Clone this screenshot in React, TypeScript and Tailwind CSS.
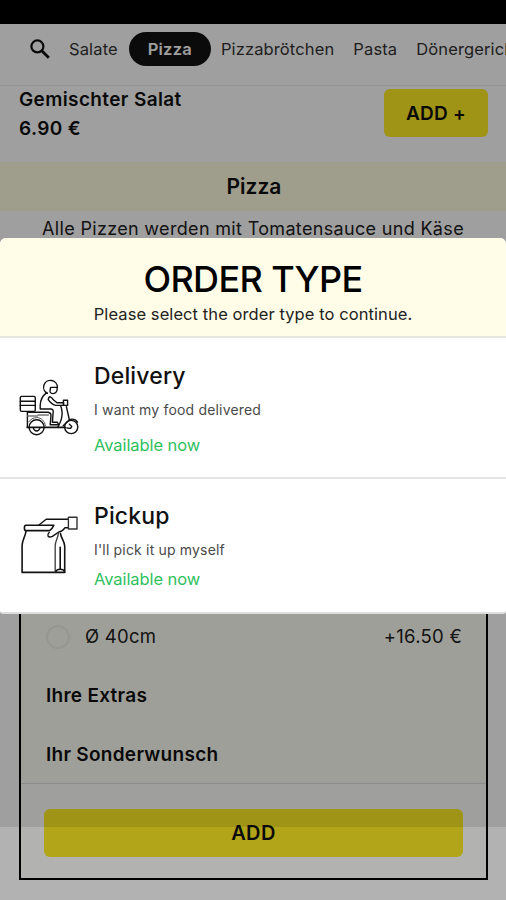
import React from 'react';

const CATEGORIES = ['Salate', 'Pizza', 'Pizzabrötchen', 'Pasta', 'Dönergerichte'];

function SearchIcon() {
  return (
    <svg viewBox="0 0 20 20" className="w-5 h-5 shrink-0" fill="none" stroke="#111" strokeWidth="2.2">
      <circle cx="7.4" cy="7.4" r="6" />
      <path d="M12 12l6.8 6.8" strokeWidth="2.8" />
    </svg>
  );
}

function ScooterIcon() {
  return (
    <svg viewBox="4 4 60 58" className="w-[60px] h-[58px] shrink-0" fill="none" stroke="#111" strokeWidth="1.4" strokeLinecap="round" strokeLinejoin="round">
      {/* box */}
      <rect x="5.3" y="22.4" width="15" height="15" rx="1.4" />
      <path d="M5.3 27.2h15M5.3 31.4h15" />
      {/* rider */}
      <path d="M32.4 19.4a6.9 6.9 0 1 1 10-6h-6.8l-.6 3.8" />
      <path d="M42.2 13.6c.4 3.4-1.4 6-4.2 6-1.4 0-2.4-.6-3-1.6" />
      <path d="M31.8 18.6c-3.6 2.6-6.4 7.4-6.6 12.6V35h10.6c1.6 0 2.6 1.2 2.4 2.8l-.8 10.4h4.8l1.6 2.6h-8.6l.8-9.6c0-1.6-.6-2.2-2-2.4" />
      <path d="M34.8 22.6c1.6.6 2.8 2 3.8 3.4l3.4 2.8h6.6v2.6h-8c-3-.8-5.6-3.2-7.4-5.8.2-1.4.6-2.4 1.6-3z" />
      {/* body */}
      <path d="M48.4 26.2h4.2v5.2h-4.2z" />
      <path d="M45.6 31.6c1.6 4.4 2 9.6.6 14-.8 2.8-1.8 4.8-3.4 7.6M51.4 32.6l3 13.4" />
      <path d="M12.2 38.2h21.4M12.4 38.2v14.2" />
      <path d="M12.8 42h9.4M23 41h10.4" stroke="#777" />
      <path d="M12.2 53.4h38.2" strokeWidth="1.7" />
      <path d="M13.6 48c1.8-2.6 4.6-4.4 8-4.4 4.6 0 8.4 3.6 8.8 8.4" stroke="#555" strokeWidth="1" />
      <path d="M48.2 51.8l6-5.8c3.2-1.6 6.6-.4 8.4 2.2" />
      {/* wheels */}
      <circle cx="21.6" cy="53.2" r="7.5" />
      <path d="M18.4 54.4c.6 1.8 1.8 2.6 3.2 2.6s2.6-.8 3.2-2.6" />
      <circle cx="56.2" cy="53" r="6.6" />
      <path d="M54.4 50.2l2.4 2.2-1.2 2-3.6-.4" />
    </svg>
  );
}

function BagIcon() {
  return (
    <svg viewBox="4 4 60 60" className="w-[60px] h-[60px] shrink-0" fill="none" stroke="#111" strokeWidth="1.4" strokeLinecap="round" strokeLinejoin="round">
      <path d="M11 21c-.4 5-3.9 9.4-3.9 14.4v27h42.6V36c0-4.6-3.4-7.4-4.2-12.4" strokeWidth="1.6" />
      <path d="M38.8 15.3H11c-1.2 0-1.6.9-1.6 2.6 0 1.8.4 2.7 1.6 2.7h23.6c2-1.4 3.4-3.2 4.2-5.3z" strokeWidth="1.6" />
      {/* arm */}
      <path d="M24.2 14.8l7-5.6h22M53.4 17.8h-3.6c-1.6 2.6-3.2 3.8-6 4.2l-6.4 4.4c-1.8.8-3.6.8-4.4-.4-.6-1.2 0-2.4 1.2-3.6" />
      <rect x="53.4" y="7.2" width="8.6" height="11.8" stroke="#333" />
      {/* side fold */}
      <path d="M43.4 23.4c-.4 4.6-3.2 8-3.2 12.4V62" stroke="#444" />
      <path d="M45.2 37.4v21.4" strokeWidth="1.6" />
      <path d="M40.6 62c.6-1.8 2.4-2.8 4.6-2.8s4 1 4.6 2.8" />
    </svg>
  );
}

type OrderOptionProps = {
  icon: React.ReactNode;
  title: string;
  text: string;
};

function OrderOption({ icon, title, text }: OrderOptionProps) {
  return (
    <>
      {icon}
      <div className="ml-[15px] flex flex-col items-start">
        <h3 className="text-[23px] leading-7 font-medium tracking-[0.15px]">{title}</h3>
        <p className="mt-2.5 text-[14px] leading-5 text-[#4a4a4a] tracking-[0.18px]">{text}</p>
      </div>
    </>
  );
}

function OrderTypeModal() {
  return (
    <div className="absolute inset-x-0 top-[238px] z-10 h-[376px] bg-white rounded-t-md rounded-b-[3px] overflow-hidden border-b-2 border-[#dedede] text-[#111]">
      <header className="h-[100px] pt-[21px] bg-[#fffde8] border-b-2 border-[#e7e7e0] text-center">
        <h2 className="text-[36px] leading-10 font-medium tracking-[-0.65px] text-black">ORDER TYPE</h2>
        <p className="mt-[5px] text-[16.5px] leading-5 tracking-[0.08px] text-[#222]">Please select the order type to continue.</p>
      </header>
      <div className="relative h-[141px] pl-[19px] pt-6 flex items-start border-b-2 border-[#e3e5e5]">
        <OrderOption icon={<div className="pt-4"><ScooterIcon /></div>} title="Delivery" text="I want my food delivered" />
        <span className="absolute left-[94px] top-[97px] text-[16.5px] leading-5 tracking-[-0.08px] text-[#2fc05e]">Available now</span>
      </div>
      <div className="relative h-[135px] pl-[19px] pt-[23px] flex items-start">
        <OrderOption icon={<div className="pt-3"><BagIcon /></div>} title="Pickup" text="I'll pick it up myself" />
        <span className="absolute left-[94px] top-[90px] text-[16.5px] leading-5 tracking-[-0.08px] text-[#2fc05e]">Available now</span>
      </div>
    </div>
  );
}

export default function App() {
  return (
    <div className="relative w-[506px] h-[900px] overflow-hidden flex flex-col bg-white text-[#111] font-['Inter',sans-serif]">
      <div className="h-6 shrink-0 bg-black" />
      <nav className="h-[62px] shrink-0 pt-2 pl-[30px] flex items-start border-b border-[#eee] overflow-hidden">
        <div className="h-[34px] flex items-center whitespace-nowrap text-[16.5px] text-[#333]">
          <SearchIcon />
          {CATEGORIES.map(name => (
            <span
              key={name}
              className={name === 'Pizza'
                ? 'h-[34px] px-[19px] ml-[11px] -mr-[9px] rounded-full bg-[#141414] text-white font-semibold tracking-[0.2px] flex items-center'
                : 'ml-[19px] tracking-[0.13px]'}
            >
              {name}
            </span>
          ))}
        </div>
      </nav>

      <section className="h-[76px] shrink-0 pl-[19px] pr-[18px] flex items-start justify-between font-semibold">
        <div className="text-[19px] leading-[29px] -mt-px tracking-[0.38px]">
          <p>Gemischter Salat</p>
          <p>6.90 €</p>
        </div>
        <button className="w-[104px] h-12 mt-[3px] rounded-md bg-[#ffed24] pt-0.5 text-[19px] tracking-[0.2px]">ADD +</button>
      </section>

      <h1 className="h-[49px] shrink-0 flex items-center justify-center bg-[#fffde2] pl-0.5 text-[21px] font-semibold">Pizza</h1>
      <p className="mt-[5px] shrink-0 text-center text-[18px] leading-[26px] tracking-[0.33px] text-[#222]">
        Alle Pizzen werden mit Tomatensauce und Käse
      </p>

      <section className="flex-1 ml-[19px] mr-[18px] mt-6 mb-5 flex flex-col justify-end border-2 border-black bg-[#fffff5]">
        <div className="flex items-center pl-[25px] pr-6 h-10 text-[18.5px] tracking-[0.25px] text-[#222]">
          <span className="w-6 h-6 rounded-full border-2 border-[#efefea]" />
          <span className="ml-[15px]">Ø 40cm</span>
          <span className="ml-auto">+16.50 €</span>
        </div>
        <h4 className="mt-[19px] pl-[25px] leading-10 text-[19px] font-semibold tracking-[0.28px]">Ihre Extras</h4>
        <h4 className="mt-[19px] pl-[25px] leading-10 text-[19px] font-semibold tracking-[0.28px]">Ihr Sonderwunsch</h4>
        <footer className="mt-[8px] h-[95px] border-t border-[#dedede] bg-[#fffffc] pt-[25px] pl-[23px] pr-[23px]">
          <button className="w-full h-12 rounded-md bg-[#ffed24] text-[20px] font-semibold tracking-[0.4px]">ADD</button>
        </footer>
      </section>

      {/* backdrops */}
      <div className="absolute inset-0 bg-black/30" />
      <div className="absolute inset-x-0 top-0 h-[827px] bg-black/10" />
      <OrderTypeModal />
    </div>
  );
}
